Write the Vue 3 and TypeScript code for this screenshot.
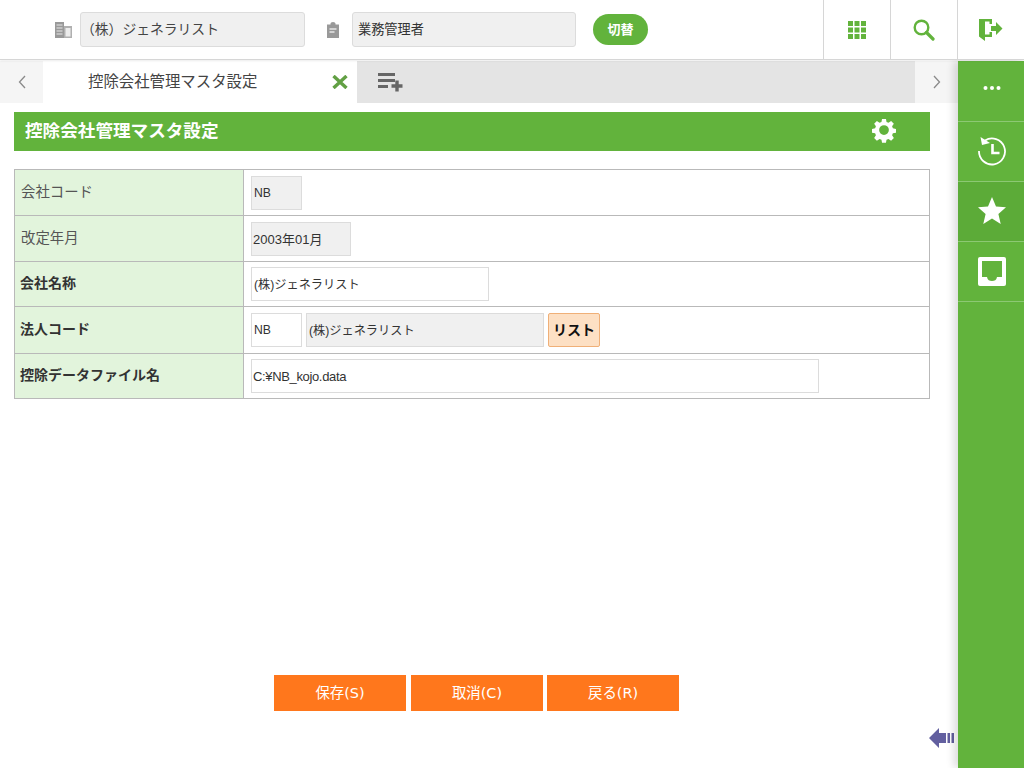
<script setup lang="ts">
interface Row { label: string; bold: boolean }
const rows: Row[] = [
  { label: '会社コード', bold: false },
  { label: '改定年月', bold: false },
  { label: '会社名称', bold: true },
  { label: '法人コード', bold: true },
  { label: '控除データファイル名', bold: true },
]
const actions: string[] = ['保存(S)', '取消(C)', '戻る(R)']
</script>

<template>
  <div class="page">
    <header class="top">
      <div class="ctx">
        <svg class="ico-build" viewBox="0 0 17 16" width="17" height="16">
          <rect x="0" y="0" width="9" height="16" fill="#999" />
          <rect x="9" y="4" width="8" height="12" fill="#b0b0b0" />
          <path d="M1.500 3h6M1.500 6h6M1.500 9h6M1.500 12h6" stroke="#e8e8e8" stroke-width="1" />
          <rect x="10.500" y="6" width="5" height="8.500" fill="#ececec" />
        </svg>
        <div class="fake f-company"><span>（株）ジェネラリスト</span></div>
        <svg class="ico-clip" viewBox="0 0 14 16" width="14" height="16">
          <path d="M1 2.500h3.500V1.500a2.500 1.500 0 0 1 5 0v1H13v13.500H1z" fill="#999" />
          <path d="M3.500 7h7M3.500 10h5" stroke="#e6e6e6" stroke-width="1.400" />
        </svg>
        <div class="fake f-role"><span>業務管理者</span></div>
        <button class="switch">切替</button>
      </div>
      <div class="cell">
        <svg viewBox="0 0 18 18" width="18" height="18" fill="#62b33c">
          <rect x="0" y="0" width="5" height="5" /><rect x="6.500" y="0" width="5" height="5" /><rect x="13" y="0" width="5" height="5" />
          <rect x="0" y="6.500" width="5" height="5" /><rect x="6.500" y="6.500" width="5" height="5" /><rect x="13" y="6.500" width="5" height="5" />
          <rect x="0" y="13" width="5" height="5" /><rect x="6.500" y="13" width="5" height="5" /><rect x="13" y="13" width="5" height="5" />
        </svg>
      </div>
      <div class="cell">
        <svg viewBox="0 0 22 22" width="22" height="22" fill="none" stroke="#62b33c">
          <circle cx="8.500" cy="8.500" r="6.800" stroke-width="2.400" />
          <path d="M13.500 13.500l6.500 6.500" stroke-width="3.200" stroke-linecap="round" />
        </svg>
      </div>
      <div class="cell">
        <svg viewBox="0 0 24 22" width="24" height="22" fill="#62b33c">
          <path d="M0 0h13v5h-2.500V2.500H6v13h4.500V13H13v5H6v4L0 17.500z" />
          <path d="M12 7h5V3l6.500 6.500L17 16v-4h-5z" />
        </svg>
      </div>
    </header>

    <div class="body">
      <main class="main">
        <nav class="tabs">
          <div class="arrow">
            <svg viewBox="0 0 8 14" width="8" height="14" fill="none" stroke="#8a8a8a" stroke-width="1.300"><path d="M7 1L1.500 7L7 13" /></svg>
          </div>
          <div class="tab">
            <span class="tab-text">控除会社管理マスタ設定</span>
            <svg class="tab-x" viewBox="0 0 16 14" width="16" height="14" stroke="#62a044" stroke-width="3.400"><path d="M1.500 1L14.500 13M14.500 1L1.500 13" /></svg>
          </div>
          <div class="tab-rest">
            <svg viewBox="0 0 26 20" width="26" height="20">
              <path d="M0 2.500h17M0 8.500h17M0 14.500h10" stroke="#666" stroke-width="3" />
              <path d="M19 8.500v11M13.500 14h11" stroke="#666" stroke-width="3.400" />
            </svg>
          </div>
          <div class="arrow">
            <svg viewBox="0 0 8 14" width="8" height="14" fill="none" stroke="#8a8a8a" stroke-width="1.300"><path d="M1 1L6.500 7L1 13" /></svg>
          </div>
        </nav>

        <div class="content">
          <div class="title">
            <span class="title-text">控除会社管理マスタ設定</span>
            <svg class="gear" viewBox="0 0 24 24" width="26" height="26" fill="#fff">
              <path d="M10 0.500h4l.6 3.200 2 .8 2.700-1.800 2.800 2.800-1.800 2.700.8 2 3.200.6v4l-3.200.6-.8 2 1.800 2.700-2.800 2.800-2.700-1.800-2 .8-.6 3.200h-4l-.6-3.200-2-.8-2.700 1.800-2.800-2.800 1.800-2.700-.8-2-3.200-.6v-4l3.200-.6.800-2-1.800-2.700 2.800-2.800 2.700 1.800 2-.8zM12 7a5 5 0 1 0 0 10a5 5 0 0 0 0-10z" fill-rule="evenodd" transform="translate(1.200 -.6) scale(.9)" />
            </svg>
          </div>

          <div class="form">
            <div v-for="(r, i) in rows" :key="r.label" class="row" :class="'row' + i">
              <div class="label" :class="{ bold: r.bold }"><span>{{ r.label }}</span></div>
              <div class="value">
                <template v-if="i === 0"><div class="inp gray w51">NB</div></template>
                <template v-else-if="i === 1"><div class="inp gray w100 date">2003年01月</div></template>
                <template v-else-if="i === 2"><div class="inp w238">(株)ジェネラリスト</div></template>
                <template v-else-if="i === 3">
                  <div class="inp w51">NB</div>
                  <div class="inp gray w238">(株)ジェネラリスト</div>
                  <button class="list">リスト</button>
                </template>
                <template v-else><div class="inp w568 path">C:¥NB_kojo.data</div></template>
              </div>
            </div>
          </div>

          <div class="actions">
            <button v-for="a in actions" :key="a" class="act">{{ a }}</button>
          </div>

          <svg class="back" viewBox="0 0 28 22" width="28" height="22" fill="#625f9f">
            <path d="M0 11L10 1v5h7v10h-7v5z" />
            <rect x="18.500" y="6" width="2.500" height="10" />
            <rect x="22.500" y="6" width="2.500" height="10" />
          </svg>
        </div>
      </main>

      <aside class="side">
        <div class="s s1">
          <svg viewBox="0 0 18 4" width="18" height="4" fill="#fff"><circle cx="2.500" cy="2" r="2" /><circle cx="9" cy="2" r="2" /><circle cx="15.500" cy="2" r="2" /></svg>
        </div>
        <div class="s s2">
          <svg viewBox="0 0 30 30" width="30" height="30" fill="none" stroke="#fff" stroke-width="1.800">
            <path d="M8 4.500A13 13 0 1 1 2 15" />
            <path d="M3.500 1l1.500 8 8-2z" fill="#fff" stroke="none" />
            <path d="M15.500 8v9h7" stroke-width="2.600" />
          </svg>
        </div>
        <div class="s s3">
          <svg viewBox="0 0 28 27" width="28" height="27" fill="#fff"><path d="M14 0l4 9.500 10 .8-7.600 6.600 2.300 10L14 21.500l-8.700 5.400 2.300-10L0 10.300l10-.8z" /></svg>
        </div>
        <div class="s s4">
          <svg viewBox="0 0 28 29" width="28" height="29">
            <rect width="28" height="29" rx="2" fill="#fff" />
            <path d="M4 4h20v16h-5c-.5 3-2.500 4-5 4s-4.500-1-5-4H4z" fill="#62b33c" />
          </svg>
        </div>
      </aside>
    </div>
  </div>
</template>

<style>
html, body { margin: 0; background: #fff; }
</style>

<style scoped>
.page {
  width: 1024px;
  height: 768px;
  display: flex;
  flex-direction: column;
  overflow: hidden;
  color: #333;
  font-family: "Noto Sans CJK JP", "Noto Sans", sans-serif;
  font-size: 13px;
}
.top {
  height: 59px;
  flex: none;
  display: flex;
  border-bottom: 1px solid #d6d6d6;
  box-shadow: 0 1px 2px rgba(0, 0, 0, .08);
  background: #fff;
  position: relative;
  z-index: 2;
}
.ctx {
  flex: 1;
  display: flex;
  align-items: center;
  padding-left: 55px;
}
.ico-build { margin: 0 8px 0 0; }
.ico-clip { margin: 0 12px 0 21px; }
.fake {
  height: 33px;
  background: #f0f0f0;
  border: 1px solid #dcdcdc;
  border-radius: 3px;
  display: flex;
  align-items: center;
}
.fake span { margin-top: -4px; }
.f-company { width: 223px; font-size: 13.8px; color: #444; }
.f-role { width: 217px; padding-left: 5px; font-size: 13.2px; }
.f-role span { margin-top: -2px; }
.switch {
  margin-left: 17px;
  width: 55px;
  height: 31px;
  border: 0;
  border-radius: 16px;
  background: #62b33c;
  color: #fff;
  font: 700 13px "Noto Sans CJK JP", sans-serif;
  padding: 0 0 3px;
}
.cell {
  width: 66px;
  border-left: 1px solid #d6d6d6;
  display: flex;
  align-items: center;
  justify-content: center;
}
.body { flex: 1; display: flex; min-height: 0; }
.main { width: 958px; flex: none; display: flex; flex-direction: column; padding-top: 1px; }
.tabs { height: 42px; flex: none; display: flex; }
.arrow {
  width: 43px;
  background: #f5f5f5;
  display: flex;
  align-items: center;
  justify-content: center;
}
.tab {
  width: 314px;
  background: #fff;
  display: flex;
  align-items: center;
  justify-content: space-between;
  padding: 0 9px 0 45px;
  box-sizing: border-box;
}
.tab-text { font-size: 15.4px; color: #444; margin-top: -4px; }
.tab-rest {
  flex: 1;
  background: #e4e4e4;
  display: flex;
  align-items: center;
  padding-left: 21px;
}
.content { flex: 1; position: relative; padding: 9px 28px 0 14px; min-height: 0; }
.title {
  height: 39px;
  background: #62b33c;
  color: #fff;
  font-size: 17.6px;
  font-weight: 700;
  display: flex;
  align-items: center;
  justify-content: space-between;
  padding: 0 33px 0 11px;
}
.title-text { margin-top: -5px; }
.form {
  margin-top: 18px;
  border: 1px solid #b9b9b9;
  border-bottom: 0;
}
.row { display: flex; border-bottom: 1px solid #b9b9b9; height: 45px; }
.row2, .row4 { height: 44px; }
.row3 { height: 46px; }
.label {
  width: 229px;
  box-sizing: border-box;
  flex: none;
  background: #e2f4dc;
  border-right: 1px solid #b9b9b9;
  display: flex;
  align-items: center;
  padding-left: 6px;
  font-size: 14.4px;
  color: #555;
}
.label span { margin-top: -4px; }
.label.bold { font-weight: 700; color: #333; font-size: 14px; padding-left: 5px; }
.value { flex: 1; display: flex; align-items: center; gap: 4px; padding-left: 7px; }
.inp {
  height: 34px;
  box-sizing: border-box;
  border: 1px solid #dcdcdc;
  background: #fff;
  display: flex;
  align-items: center;
  padding-left: 2px;
  font-family: "Liberation Sans", "Noto Sans CJK JP", sans-serif;
  font-size: 12.2px;
  color: #333;
}
.date { font-size: 13px; padding-left: 1px; }
.path { font-size: 13px; letter-spacing: -.35px; padding-left: 1px; }
.gray { background: #f0f0f0; }
.w51 { width: 51px; }
.w100 { width: 100px; }
.w238 { width: 238px; }
.w568 { width: 568px; }
.list {
  width: 52px;
  height: 34px;
  border: 1px solid #f0b078;
  border-radius: 2px;
  background: #fde0c4;
  color: #111;
  font: 700 14px "Noto Sans CJK JP", sans-serif;
  padding: 0 0 2px;
}
.actions {
  position: absolute;
  left: 274px;
  top: 572px;
  display: flex;
  gap: 5px;
}
.act {
  width: 132px;
  height: 36px;
  border: 0;
  background: #ff771c;
  color: #fff;
  font: 400 14.4px "DejaVu Sans", "Noto Sans CJK JP", sans-serif;
  padding: 0 0 4px;
}
.act + .act + .act { margin-left: -1px; }
.back { position: absolute; right: 1px; top: 624px; }
.side {
  width: 66px;
  flex: none;
  background: #62b33c;
  box-shadow: -4px 0 8px rgba(0, 0, 0, .14);
  margin-top: 1px;
  position: relative;
  z-index: 1;
}
.s {
  display: flex;
  align-items: center;
  justify-content: center;
  border-bottom: 1px solid #8cc873;
  height: 60px;
  box-sizing: border-box;
  padding-left: 2px;
}
.s1 { height: 61px; padding-bottom: 6px; }
.s2 { padding-bottom: 2px; padding-left: 1px; }
.s3 { background: #5cab38; padding-bottom: 2px; }
</style>
